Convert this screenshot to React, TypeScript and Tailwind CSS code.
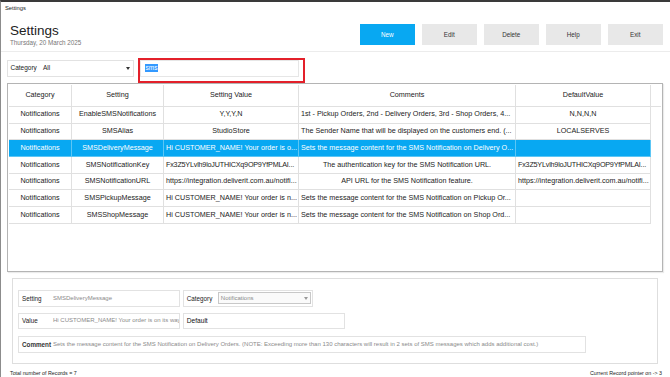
import React from 'react';

type Row = {
  cat: string;
  name: string;
  value: string;
  valueCenter?: boolean;
  comment: string;
  commentCenter?: boolean;
  def: string;
  defCenter?: boolean;
  tight?: boolean;
};

const rows: Row[] = [
  {
    cat: 'Notifications',
    name: 'EnableSMSNotifications',
    value: 'Y,Y,Y,N',
    valueCenter: true,
    comment: '1st - Pickup Orders, 2nd - Delivery Orders, 3rd - Shop Orders, 4...',
    def: 'N,N,N,N',
    defCenter: true,
  },
  {
    cat: 'Notifications',
    name: 'SMSAlias',
    value: 'StudioStore',
    valueCenter: true,
    comment: 'The Sender Name that will be displayed on the customers end. (...',
    def: 'LOCALSERVES',
    defCenter: true,
  },
  {
    cat: 'Notifications',
    name: 'SMSDeliveryMessage',
    value: 'Hi CUSTOMER_NAME! Your order is o...',
    comment: 'Sets the message content for the SMS Notification on Delivery O...',
    def: '',
  },
  {
    cat: 'Notifications',
    name: 'SMSNotificationKey',
    value: 'Fx3Z5YLvlh9loJUTHICXq9OP9YfPMLAI...',
    comment: 'The authentication key for the SMS Notification URL.',
    commentCenter: true,
    def: 'Fx3Z5YLvlh9loJUTHICXq9OP9YfPMLAI...',
    tight: true,
  },
  {
    cat: 'Notifications',
    name: 'SMSNotificationURL',
    value: 'https://integration.deliverit.com.au/notifi...',
    comment: 'API URL for the SMS Notification feature.',
    commentCenter: true,
    def: 'https://integration.deliverit.com.au/notifi...',
  },
  {
    cat: 'Notifications',
    name: 'SMSPickupMessage',
    value: 'Hi CUSTOMER_NAME! Your order is n...',
    comment: 'Sets the message content for the SMS Notification on Pickup Or...',
    def: '',
  },
  {
    cat: 'Notifications',
    name: 'SMSShopMessage',
    value: 'Hi CUSTOMER_NAME! Your order is n...',
    comment: 'Sets the message content for the SMS Notification on Shop Ord...',
    def: '',
  },
];

const SELECTED = 2;

const Caret = ({ color = '#333' }: { color?: string }) => (
  <svg width="4" height="3" viewBox="0 0 4 3">
    <path d="M0 0 L4 0 L2 3 Z" fill={color} />
  </svg>
);

const App = () => {
  return (
    <div className="w-[670px] h-[377px] overflow-hidden bg-white border-t-2 border-t-[#3a3a3a] border-l border-l-[#8c8c8c] font-['Liberation_Sans',Arial,sans-serif] text-[#222] flex flex-col">
      {/* window title */}
      <div className="shrink-0 h-[14px] pl-[4px] flex items-center text-[5.8px] leading-none">Settings</div>

      {/* header */}
      <div className="shrink-0 h-[36px] flex justify-between border-b border-[#ececec] pr-[7px]">
        <div className="pl-[9px] pt-[7.5px]">
          <h1 className="text-[13.5px] leading-none">Settings</h1>
          <p className="mt-[3.3px] text-[6.3px] leading-none text-[#777]">Thursday, 20 March 2025</p>
        </div>
        <div className="flex gap-[6.5px] pt-[8px]">
          <button className="w-[55.5px] h-[20.5px] bg-[#08a8f2] text-white text-[6.3px]">New</button>
          <button className="w-[55.5px] h-[20.5px] bg-[#e8e8e8] text-[#333] text-[6.3px]">Edit</button>
          <button className="w-[55.5px] h-[20.5px] bg-[#e8e8e8] text-[#333] text-[6.3px]">Delete</button>
          <button className="w-[55.5px] h-[20.5px] bg-[#e8e8e8] text-[#333] text-[6.3px]">Help</button>
          <button className="w-[55.5px] h-[20.5px] bg-[#e8e8e8] text-[#333] text-[6.3px]">Exit</button>
        </div>
      </div>

      {/* filter row */}
      <div className="shrink-0 h-[31px] flex items-start pt-[7.5px] pl-[5.5px]">
        <div className="w-[127px] h-[17.5px] border border-[#e2e2e2] flex items-center pl-[3px] pr-[3px] text-[6.5px]">
          <span>Category</span>
          <span className="ml-[6px]">All</span>
          <span className="ml-auto">
            <Caret />
          </span>
        </div>
        <div className="relative ml-[6.5px] w-[159px] h-[17px] border border-[#e6e6e6] flex items-center pl-[3.5px]">
          <span className="bg-[#3399ff] text-white text-[6.5px] leading-[8.5px] px-[1px]">sms</span>
          <div className="absolute -left-[3.5px] -top-[3px] -right-[7px] -bottom-[7px] border-2 border-[#e3202a]" />
        </div>
      </div>

      {/* grid */}
      <div className="shrink-0 ml-[6px] w-[656px] h-[189px] border border-[#b4b4b4] shadow-[1px_1px_1px_rgba(0,0,0,0.08)] p-[1px] text-[7.2px]">
        <div className="flex h-[22px] border-b border-[#e0e0e0] items-center">
          <div className="w-[63px] h-full flex items-center justify-center border-r border-[#e0e0e0]">Category</div>
          <div className="w-[92px] h-full flex items-center justify-center border-r border-[#e0e0e0]">Setting</div>
          <div className="w-[135px] h-full flex items-center justify-center border-r border-[#e0e0e0]">Setting Value</div>
          <div className="w-[217px] h-full flex items-center justify-center border-r border-[#e0e0e0]">Comments</div>
          <div className="w-[135px] h-full flex items-center justify-center border-r border-[#e0e0e0]">DefaultValue</div>
        </div>
        {rows.map((r, i) => {
          const sel = i === SELECTED;
          const line = sel ? 'border-[#5cc6f5]' : 'border-[#e0e0e0]';
          const tight = r.tight ? 'tracking-[-0.2px]' : '';
          return (
            <div
              key={r.name}
              className={`flex w-[642px] h-[16.7px] border-b ${line} ${sel ? 'bg-[#08a8f2] text-white' : ''}`}
            >
              <div className={`w-[63px] h-full flex items-center justify-center border-r ${line}`}>{r.cat}</div>
              <div className={`w-[92px] h-full flex items-center justify-center border-r ${line}`}>{r.name}</div>
              <div
                className={`w-[135px] h-full flex items-center px-[2px] overflow-hidden whitespace-nowrap border-r ${line} ${tight} ${r.valueCenter ? 'justify-center' : ''}`}
              >
                {r.value}
              </div>
              <div
                className={`w-[217px] h-full flex items-center px-[2px] overflow-hidden whitespace-nowrap border-r ${line} ${r.commentCenter ? 'justify-center' : ''}`}
              >
                {r.comment}
              </div>
              <div
                className={`w-[135px] h-full flex items-center px-[2px] overflow-hidden whitespace-nowrap border-r ${line} ${tight} ${r.defCenter ? 'justify-center' : ''}`}
              >
                {r.def}
              </div>
            </div>
          );
        })}
      </div>

      {/* detail panel */}
      <div className="shrink-0 mt-[5.5px] ml-[11px] w-[646px] h-[86px] border border-[#dedede] pt-[11.5px] pl-[4.5px] flex flex-col gap-[6px] text-[6px]">
        <div className="flex gap-[3.3px]">
          <div className="w-[162px] h-[16.5px] border border-[#e2e2e2] flex items-center pl-[3.5px]">
            <span className="w-[31px] text-[6.3px] text-[#222]">Setting</span>
            <span className="text-[#8a8a8a]">SMSDeliveryMessage</span>
          </div>
          <div className="w-[130px] h-[16.5px] border border-[#e2e2e2] flex items-center pl-[3px]">
            <span className="w-[31px] text-[6.3px] text-[#222]">Category</span>
            <div className="w-[93px] h-[12px] border border-[#c8c8c8] bg-[#fafafa] flex items-center pl-[2px] pr-[2px] text-[#8a8a8a]">
              <span>Notifications</span>
              <span className="ml-auto">
                <Caret color="#999" />
              </span>
            </div>
          </div>
        </div>
        <div className="flex gap-[3.3px]">
          <div className="w-[162px] h-[16.5px] border border-[#e2e2e2] flex items-center pl-[3.5px] overflow-hidden whitespace-nowrap">
            <span className="w-[31px] shrink-0 text-[6.3px] text-[#222]">Value</span>
            <span className="text-[#8a8a8a]">Hi CUSTOMER_NAME! Your order is on its way</span>
          </div>
          <div className="w-[162px] h-[16.5px] border border-[#e2e2e2] flex items-center pl-[3px]">
            <span className="text-[6.6px] text-[#111]">Default</span>
          </div>
        </div>
        <div className="mt-[1px] w-[568px] h-[16.5px] border border-[#e2e2e2] flex items-center pl-[3.5px] whitespace-nowrap overflow-hidden">
          <span className="w-[31px] shrink-0 text-[6.3px] font-semibold text-[#333]">Comment</span>
          <span className="text-[#8a8a8a]">
            Sets the message content for the SMS Notification on Delivery Orders. (NOTE: Exceeding more than 130 characters will result in 2 sets of SMS messages which adds additional cost.)
          </span>
        </div>
      </div>

      {/* status */}
      <div className="shrink-0 mt-[7.5px] flex justify-between pl-[9px] pr-[8px] text-[5.3px] leading-none">
        <span>Total number of Records = 7</span>
        <span>Current Record pointer on -&gt; 3</span>
      </div>
    </div>
  );
};

export default App;
